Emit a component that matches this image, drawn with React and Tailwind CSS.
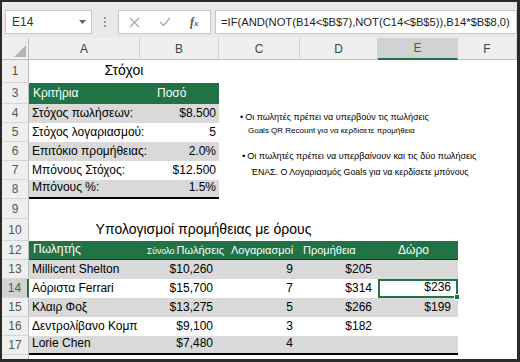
import React from "react";

const F = { fontFamily: '"Liberation Sans", Arial, sans-serif' };

function RowHdr({ n, sel }) {
  return (
    <div
      className={
        sel
          ? "w-[27px] shrink-0 flex items-center justify-center text-[12px] bg-[#d2d2d2] text-[#217346] border-r-2 border-r-[#217346] border-b border-b-[#d6d6d6]"
          : "w-[27px] shrink-0 flex items-center justify-center text-[12px] bg-[#efefef] text-[#555] border-r border-r-[#bdbdbd] border-b border-b-[#d6d6d6]"
      }
    >
      {n}
    </div>
  );
}

function ColHdr({ label, w, sel }) {
  return (
    <div
      className={
        (sel
          ? "bg-[#d2d2d2] text-[#217346] border-b-2 border-b-[#217346] "
          : "bg-[#efefef] text-[#444] border-b border-b-[#bdbdbd] ") +
        w +
        " shrink-0 flex items-center justify-center text-[12px] border-r border-r-[#d0d0d0]"
      }
    >
      {label}
    </div>
  );
}

const goals = [
  ["Στόχος πωλήσεων:", "$8.500"],
  ["Στόχος λογαριασμού:", "5"],
  ["Επιτόκιο προμήθειας:", "2.0%"],
  ["Μπόνους Στόχος:", "$12.500"],
  ["Μπόνους %:", "1.5%"],
];

const sales = [
  ["Millicent Shelton", "$10,260", "9", "$205", ""],
  ["Αόριστα Ferrari", "$15,700", "7", "$314", "$236"],
  ["Κλαιρ Φοξ", "$13,275", "5", "$266", "$199"],
  ["Δεντρολίβανο Κομπ", "$9,100", "3", "$182", ""],
  ["Lorie Chen", "$7,480", "4", "", ""],
];

export default function App() {
  return (
    <div
      style={F}
      className="relative w-[520px] h-[362px] overflow-hidden bg-white border-t-2 border-l-2 border-r-[3px] border-b-[3px] border-[#2a2a2a] text-black"
    >
      {/* formula bar */}
      <div className="h-[36px] bg-[#e9e9e9] flex items-start pt-[8px]">
        <div className="ml-[3px] w-[87px] h-[24px] bg-white border border-[#c6c6c6] flex items-center justify-between pl-[6px] pr-[5px] text-[12px] text-[#333]">
          <span>E14</span>
          <svg width="7" height="4" viewBox="0 0 7 4">
            <polygon points="0,0 7,0 3.5,4" fill="#666" />
          </svg>
        </div>
        <div className="w-[26px] h-[24px] flex flex-col items-center justify-center gap-[2px]">
          <span className="w-[2px] h-[2px] bg-[#9a9a9a]" />
          <span className="w-[2px] h-[2px] bg-[#9a9a9a]" />
          <span className="w-[2px] h-[2px] bg-[#9a9a9a]" />
        </div>
        <div className="w-[93px] h-[24px] bg-white border border-[#c6c6c6] flex items-center pl-[10px] gap-[19px]">
          <svg width="11" height="11" viewBox="0 0 11 11">
            <path d="M1 1 L10 10 M10 1 L1 10" stroke="#a6a6a6" strokeWidth="1.3" />
          </svg>
          <svg width="12" height="10" viewBox="0 0 12 10">
            <path d="M1 5 L4.5 8.5 L11 1" stroke="#a6a6a6" strokeWidth="1.3" fill="none" />
          </svg>
          <span
            className="text-[12px] italic text-[#555] font-bold"
            style={{ fontFamily: '"Liberation Serif", serif' }}
          >
            f<span className="text-[9px]">x</span>
          </span>
        </div>
        <div className="ml-[4px] flex-1 h-[24px] bg-white border border-[#c6c6c6] flex items-center pl-[5px] text-[11.2px] text-[#222] whitespace-nowrap overflow-hidden">
          =IF(AND(NOT(B14&lt;$B$7),NOT(C14&lt;$B$5)),B14*$B$8,0)
        </div>
      </div>

      {/* column headers */}
      <div className="flex h-[22px]">
        <div className="w-[27px] shrink-0 bg-[#efefef] border-r border-r-[#bdbdbd] border-b border-b-[#bdbdbd] flex items-end justify-end pr-[2px] pb-[2px]">
          <svg width="12" height="12" viewBox="0 0 12 12">
            <polygon points="12,0 12,12 0,12" fill="#b5b5b5" />
          </svg>
        </div>
        <ColHdr label="A" w="w-[111px]" />
        <ColHdr label="B" w="w-[79px]" />
        <ColHdr label="C" w="w-[81px]" />
        <ColHdr label="D" w="w-[78px]" />
        <ColHdr label="E" w="w-[80px]" sel />
        <ColHdr label="F" w="flex-1" />
      </div>

      {/* row 1 */}
      <div className="flex h-[23px]">
        <RowHdr n="1" />
        <div className="w-[190px] flex items-end justify-center pb-[2px] text-[14px]">Στόχοι</div>
      </div>

      {/* row 3 */}
      <div className="flex h-[21px]">
        <RowHdr n="3" />
        <div className="w-[190px] flex bg-[#217346] text-white text-[12px]">
          <div className="w-[111px] flex items-end pl-[4px] pb-[2px]">Κριτήρια</div>
          <div className="w-[79px] flex items-end pl-[17px] pb-[2px]">Ποσό</div>
        </div>
      </div>

      {goals.map(([l, v], i) => (
        <div key={l} className="flex h-[19px]">
          <RowHdr n={String(i + 4)} />
          <div
            className={
              (i % 2 === 0 ? "bg-[#d9d9d9] " : "bg-white ") +
              (i === 4 ? "border-b-2 border-b-black " : "") +
              "w-[190px] flex text-[12px]"
            }
          >
            <div className="w-[111px] flex items-end pl-[3px] pb-[1px] whitespace-nowrap">{l}</div>
            <div className="w-[79px] flex items-end justify-end pr-[3px] pb-[1px]">{v}</div>
          </div>
        </div>
      ))}

      {/* row 9 */}
      <div className="flex h-[20px]">
        <RowHdr n="9" />
      </div>

      {/* row 10 */}
      <div className="flex h-[22px]">
        <RowHdr n="10" />
        <div className="w-[349px] flex items-end justify-center pb-[1px] text-[14px] whitespace-nowrap">
          Υπολογισμοί προμήθειας με όρους
        </div>
      </div>

      {/* row 12 */}
      <div className="flex h-[19px]">
        <RowHdr n="12" />
        <div className="w-[429px] flex bg-[#217346] text-white text-[11px] whitespace-nowrap border-b border-b-[#1c3b28]">
          <div className="w-[111px] flex items-end pl-[4px] pb-[1px] text-[12px]">Πωλητής</div>
          <div className="w-[79px] flex items-end pl-[7px] pb-[1px]">
            <span className="text-[8.5px] mr-[2px]">Σύνολο</span>
            <span>Πωλήσεις</span>
          </div>
          <div className="w-[81px] flex items-end pl-[12px] pb-[1px]">Λογαριασμοί</div>
          <div className="w-[78px] flex items-end pl-[3px] pb-[1px]">Προμήθεια</div>
          <div className="w-[80px] flex items-end pl-[20px] text-[12px]">Δώρο</div>
        </div>
      </div>

      {sales.map(([n, s, c, p, b], i) => (
        <div key={n} className="flex h-[19px]">
          <RowHdr n={String(i + 13)} sel={i === 1} />
          <div
            className={
              (i % 2 === 0 ? "bg-[#d9d9d9] " : "bg-white ") +
              (i === 4 ? "border-b-2 border-b-black " : "") +
              "w-[429px] flex text-[12px] whitespace-nowrap"
            }
          >
            <div className="w-[111px] flex items-end pl-[3px] pb-[1px]">{n}</div>
            <div className="w-[79px] flex items-end justify-end pr-[6px] pb-[1px]">{s}</div>
            <div className="w-[81px] flex items-end justify-end pr-[7px] pb-[1px]">{c}</div>
            <div className="w-[78px] flex items-end justify-end pr-[6px] pb-[1px]">{p}</div>
            {i === 1 ? (
              <div className="relative w-[80px] flex items-end justify-end pr-[5px] pb-[0px] border-2 border-[#217346]">
                {b}
                <span className="absolute -right-[4px] -bottom-[4px] w-[6px] h-[6px] bg-[#217346] border border-white" />
              </div>
            ) : (
              <div className="w-[80px] flex items-end justify-end pr-[7px] pb-[1px]">{b}</div>
            )}
          </div>
        </div>
      ))}

      <div className="flex h-[19px]">
        <RowHdr n="18" />
      </div>

      {/* floating text box */}
      <div className="absolute left-[238px] top-[111px] leading-none text-black whitespace-nowrap">
        <div className="flex text-[9px]">
          <span className="mr-[2px]">•</span>
          <span>Οι πωλητές πρέπει να υπερβούν τις πωλήσεις</span>
        </div>
        <div className="pl-[8px] mt-[5px] text-[8px]">Goals QR Recount για να κερδίσετε προμήθεια</div>
        <div className="flex mt-[17px] pl-[2px] text-[9.1px]">
          <span className="mr-[2px]">•</span>
          <span>Οι πωλητές πρέπει να υπερβαίνουν και τις δύο πωλήσεις</span>
        </div>
        <div className="pl-[11px] mt-[7px] text-[8.8px]">ΈΝΑΣ. Ο Λογαριασμός Goals για να κερδίσετε μπόνους</div>
      </div>
    </div>
  );
}
